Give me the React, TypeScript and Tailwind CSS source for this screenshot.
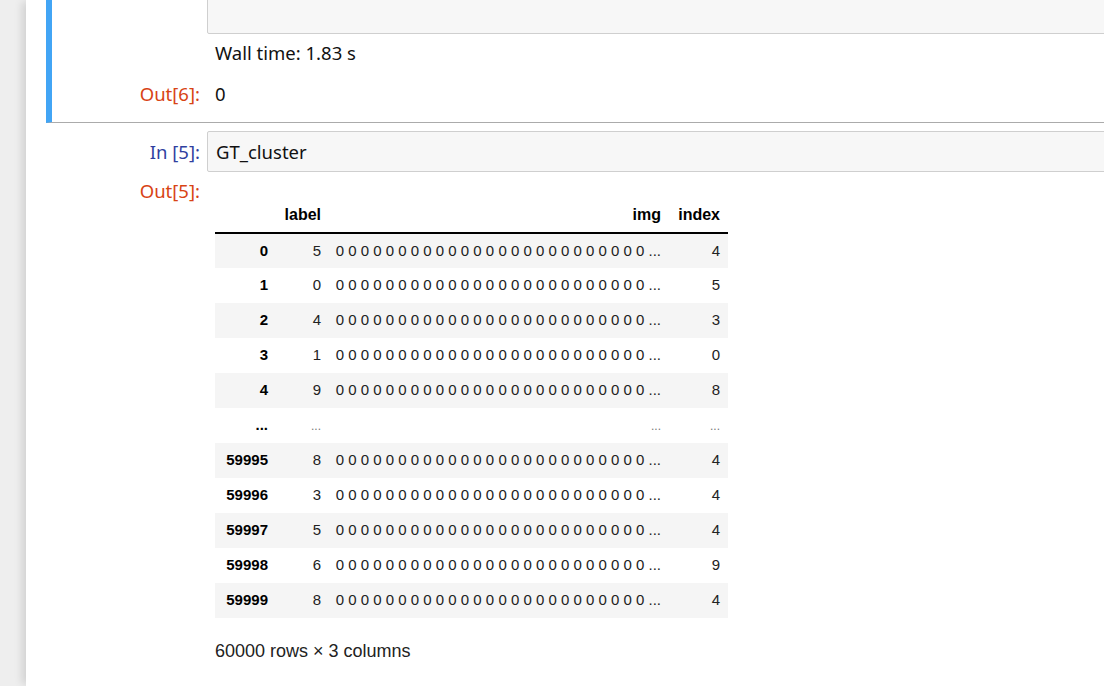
import React from "react";

const ui = { fontFamily: '"Noto Sans", "Open Sans", sans-serif' };
const tbl = { fontFamily: '"Liberation Sans", Arial, sans-serif' };

const zeros = Array(25).fill("0").join(" ") + " ...";

const rows: [string, string, string][] = [
  ["0", "5", "4"],
  ["1", "0", "5"],
  ["2", "4", "3"],
  ["3", "1", "0"],
  ["4", "9", "8"],
  ["...", "...", "..."],
  ["59995", "8", "4"],
  ["59996", "3", "4"],
  ["59997", "5", "4"],
  ["59998", "6", "9"],
  ["59999", "8", "4"],
];

const Prompt = ({ children, color }: { children: React.ReactNode; color: string }) => (
  <div className={`w-[155px] shrink-0 pr-[7px] text-right text-[18.5px] ${color}`}>{children}</div>
);

export default function App() {
  return (
    <div className="w-[1104px] h-[686px] overflow-hidden bg-[#eeeeee]" style={ui}>
      <div className="ml-[26px] w-[1200px] h-full bg-white shadow-[-6px_0_8px_-2px_rgba(0,0,0,0.12)]">
        {/* selected cell */}
        <div className="ml-[20px] flex flex-col border-l-[6px] border-l-[#42a5f5] border-b border-b-[#ababab]">
          <div className="flex -mt-[26px]">
            <div className="w-[155px] shrink-0" />
            <div className="flex-1 h-[60px] bg-[#f7f7f7] border border-[#cfcfcf] rounded-[2px]" />
          </div>
          <div className="flex items-center h-[38px]">
            <div className="w-[155px] shrink-0" />
            <div className="pl-[8px] text-[18.5px] text-[#111]">Wall time: 1.83 s</div>
          </div>
          <div className="flex items-center h-[44px]">
            <Prompt color="text-[#d84315]">Out[6]:</Prompt>
            <div className="pl-[8px] text-[18.5px] text-[#111]">0</div>
          </div>
          <div className="h-[6px]" />
        </div>

        {/* GT_cluster cell */}
        <div className="ml-[20px] border-l-[6px] border-l-transparent pt-[8px]">
          <div className="flex items-center">
            <Prompt color="text-[#303f9f]">In&nbsp;[5]:</Prompt>
            <div className="flex-1 h-[41px] flex items-center px-[8px] bg-[#f7f7f7] border border-[#cfcfcf] rounded-[2px] text-[18.5px] text-[#111]">
              GT_cluster
            </div>
          </div>
          <div className="flex mt-[8px]">
            <div className="w-[155px] shrink-0 pr-[7px] text-right text-[18.5px] leading-[22px] text-[#d84315]">Out[5]:</div>
            <div className="pl-[8px] pt-[18px]">
              <table className="border-collapse text-[15px] text-black" style={tbl}>
                <thead>
                  <tr className="h-[35px] border-b-2 border-black text-[16px]">
                    <th className="w-[61px]" />
                    <th className="w-[53px] pr-[8px] text-right font-bold">label</th>
                    <th className="w-[340px] pr-[8px] text-right font-bold">img</th>
                    <th className="w-[59px] pr-[8px] text-right font-bold">index</th>
                  </tr>
                </thead>
                <tbody>
                  {rows.map((r, i) => {
                    const dots = r[0] === "...";
                    return (
                      <tr key={i} className={`h-[35px] ${i % 2 === 0 ? "bg-[#f5f5f5]" : "bg-white"}`}>
                        <th className="pr-[8px] text-right font-bold">{r[0]}</th>
                        <td className={`pr-[8px] text-right ${dots ? "text-[#777] text-[12px]" : "text-[#222]"}`}>{r[1]}</td>
                        <td className={`pr-[8px] text-right whitespace-nowrap ${dots ? "text-[#777] text-[12px]" : "text-[#222]"}`}>
                          {dots ? "..." : zeros}
                        </td>
                        <td className={`pr-[8px] text-right ${dots ? "text-[#777] text-[12px]" : "text-[#222]"}`}>{r[2]}</td>
                      </tr>
                    );
                  })}
                </tbody>
              </table>
              <p className="mt-[20px] text-[18px] text-[#222]" style={tbl}>60000 rows × 3 columns</p>
            </div>
          </div>
        </div>
      </div>
    </div>
  );
}
